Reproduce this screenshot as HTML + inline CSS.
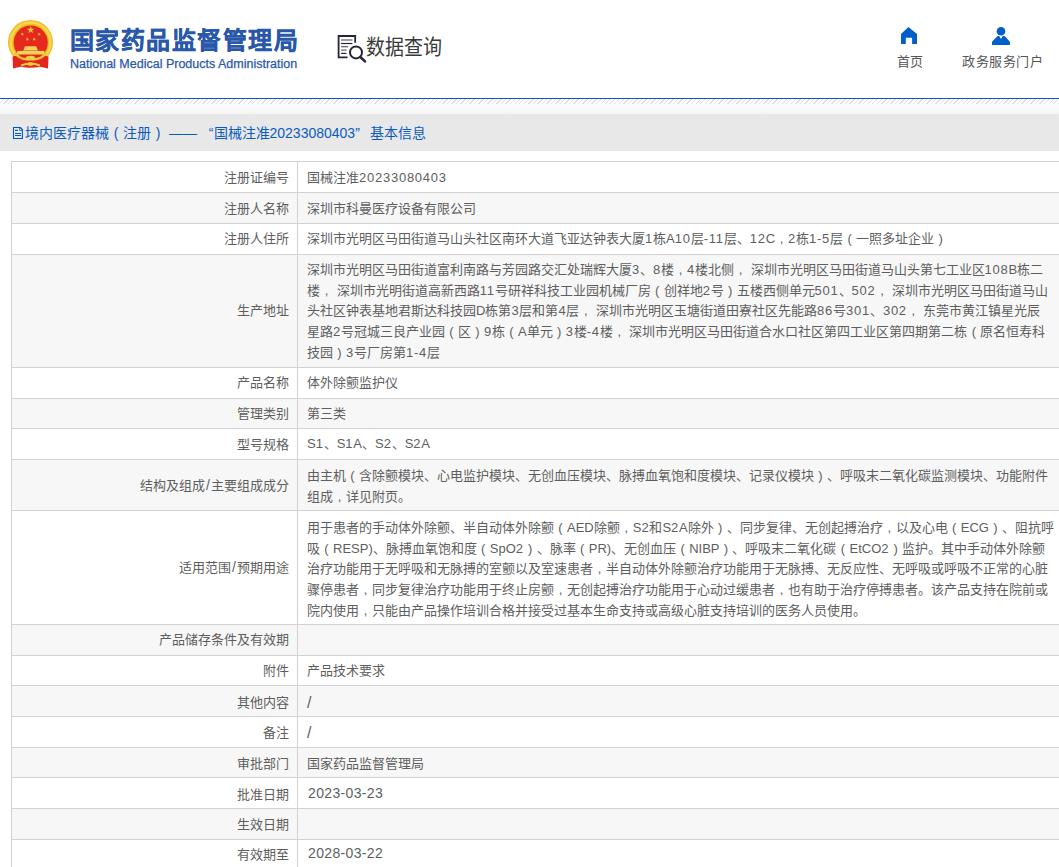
<!DOCTYPE html>
<html lang="zh-CN">
<head>
<meta charset="utf-8">
<style>
html,body{margin:0;padding:0;}
body{text-spacing-trim:space-all;width:1059px;height:867px;overflow:hidden;position:relative;background:#fff;font-family:"Liberation Sans",sans-serif;color:#555;}
.abs{position:absolute;white-space:nowrap;}
#title{left:69.5px;top:25.5px;font-size:24px;font-weight:bold;color:#2958ab;letter-spacing:1.55px;line-height:30px;-webkit-text-stroke:0.3px #2958ab;}
#eng{left:70px;top:56px;font-size:12.5px;color:#2958ab;line-height:16px;-webkit-text-stroke:0.25px #2958ab;}
#dq{left:366px;top:32px;font-size:19px;color:#3a3a3a;line-height:28px;transform:scaleY(1.1);transform-origin:0 0;}
.nav{font-size:13px;color:#555;line-height:16px;}
#bline{left:0;top:98px;width:1059px;height:1px;background:#0a5cc2;}
#hatch{left:0;top:99px;width:1059px;height:5px;background:repeating-linear-gradient(135deg,#fff 0,#fff 2.2px,#dddddd 2.2px,#dddddd 3.2px);}
#grad{left:0;top:104px;width:1059px;height:10px;background:linear-gradient(#fff,#f4f4f4);}
#band{left:0;top:114px;width:1059px;height:37px;background:#e8e8e8;}
.dash{display:inline-block;width:34px;padding-left:4px;box-sizing:border-box;}
.q1{display:inline-block;width:14.5px;text-align:right;}
.q2{display:inline-block;width:15px;text-align:left;}
#head{left:25px;top:124px;font-size:14px;color:#0b5bbf;line-height:18px;}
.row{position:absolute;left:11px;width:1100px;border-top:1px solid #d2d2d2;border-left:1px solid #d2d2d2;}
.row::after{content:"";position:absolute;left:285px;top:0;bottom:0;width:1px;background:#d2d2d2;}
.row .l{position:absolute;left:0;width:276.7px;text-align:right;}
.row .v{position:absolute;left:295px;}
.d{letter-spacing:0.75px;}
.sl{display:inline-block;width:5.5px;text-align:center;font-size:14px;}
.fw{display:inline-block;width:13px;text-align:center;}
#head .fw{width:14px;}
.row .l,.row .v{font-size:13px;line-height:20.65px;white-space:nowrap;color:#5e5e5e;}
</style>
</head>
<body>
<!-- emblem -->
<svg class="abs" style="left:0px;top:10px" width="60" height="62" viewBox="0 10 60 62">
  <circle cx="30.5" cy="42.4" r="22.5" fill="#f0bf2c"/>
  <circle cx="30.5" cy="42.4" r="19.8" fill="none" stroke="#f8d64e" stroke-width="2.2"/>
  <circle cx="30.7" cy="42.6" r="17.1" fill="#e5291d"/>
  <path d="M12.5 56.5 Q20 54.5 30.5 57 Q41 54.5 48.5 56.5 L48 68.5 L40.5 66.8 Q30.5 68.5 20.5 66.8 L13 68.5Z" fill="#e2281d"/>
  <path d="M14.5 53 Q22 61 30.5 58.8 Q39 61 46.5 53" fill="none" stroke="#efc63a" stroke-width="2.4"/>
  <ellipse cx="30.5" cy="58" rx="4.6" ry="2.3" fill="#f3cf48"/>
  <path d="M21.2 65.5 Q30.5 61.5 39.8 65.5" fill="none" stroke="#f1cb40" stroke-width="2"/>
  <ellipse cx="30.5" cy="64" rx="3.2" ry="1.8" fill="#f1cb40"/>
  <polygon points="30.70,26.00 31.64,28.71 34.50,28.76 32.22,30.49 33.05,33.24 30.70,31.60 28.35,33.24 29.18,30.49 26.90,28.76 29.76,28.71" fill="#e9c23c"/>
  <polygon points="23.15,32.45 22.93,33.77 24.06,34.50 22.74,34.69 22.40,35.99 21.80,34.79 20.46,34.87 21.42,33.93 20.93,32.69 22.12,33.30" fill="#e9c23c"/>
  <polygon points="38.25,32.45 39.28,33.30 40.47,32.69 39.98,33.93 40.94,34.87 39.60,34.79 39.00,35.99 38.66,34.69 37.34,34.50 38.47,33.77" fill="#e9c23c"/>
  <polygon points="27.89,37.36 28.02,38.70 29.30,39.10 28.07,39.64 28.08,40.97 27.19,39.97 25.92,40.40 26.60,39.24 25.81,38.17 27.11,38.45" fill="#e9c23c"/>
  <polygon points="33.81,37.36 34.59,38.45 35.89,38.17 35.10,39.24 35.78,40.40 34.51,39.97 33.62,40.97 33.63,39.64 32.40,39.10 33.68,38.70" fill="#e9c23c"/>
  <path d="M23.4 50.5 L25 46.2 H36.3 L37.9 50.5Z" fill="#f4d35a"/>
  <path d="M17.2 50.9 H44.5 V54.5 H17.2Z" fill="#f4d35a"/>
</svg>
<div id="title" class="abs">国家药品监督管理局</div>
<div id="eng" class="abs">National Medical Products Administration</div>
<!-- data query icon -->
<svg class="abs" style="left:330px;top:30px" width="40" height="36" viewBox="0 0 40 36">
  <path d="M25.2 12.8V6H8.6V27.3H17.5" fill="none" stroke="#262538" stroke-width="1.8"/>
  <path d="M11.1 10H22.4" stroke="#666675" stroke-width="1.3"/>
  <path d="M11.1 13.5H22.4" stroke="#262538" stroke-width="1.2"/>
  <path d="M11.1 16.7H18.1" stroke="#666675" stroke-width="1.3"/>
  <path d="M11.1 20.1H16.5" stroke="#666675" stroke-width="1.3"/>
  <path d="M11.1 23.4H16.5" stroke="#262538" stroke-width="1.2"/>
  <circle cx="26" cy="22.4" r="6" fill="#fff" stroke="#262538" stroke-width="2"/>
  <path d="M30.6 27.3L35 31.4" stroke="#262538" stroke-width="2.6" stroke-linecap="round"/>
</svg>
<div id="dq" class="abs">数据查询</div>
<!-- nav -->
<svg class="abs" style="left:895px;top:22px" width="30" height="28" viewBox="0 0 30 28">
  <path d="M13.4 5L22 12.1V22H17.1V15.7H10.8V22H6V12.1Z" fill="#005fc8"/>
</svg>
<div class="abs nav" style="left:897px;top:53.5px">首页</div>
<svg class="abs" style="left:986px;top:22px" width="30" height="28" viewBox="0 0 30 28">
  <circle cx="15" cy="9.2" r="4.3" fill="#005fc8"/>
  <path d="M6 22.9V19.8L11.6 14H13.2L15 17.1L16.8 14H18.7L23.9 19.8V22.9Z" fill="#005fc8"/>
</svg>
<div class="abs nav" style="left:962px;top:53.5px;letter-spacing:0.5px">政务服务门户</div>

<div id="bline" class="abs"></div>
<div id="hatch" class="abs"></div>
<div id="grad" class="abs"></div>
<div id="band" class="abs"></div>
<svg class="abs" style="left:8px;top:122px" width="20" height="22" viewBox="0 0 20 22">
  <path d="M5.5 5.5H12.4L14.4 7.6V16.5H5.5Z" fill="none" stroke="#0055c4" stroke-width="1.1"/>
  <path d="M11.3 5.3H12.6L14.6 7.4V8.7H11.3Z" fill="#0055c4"/>
  <circle cx="12.6" cy="7.4" r="0.7" fill="#f0f0f0"/>
  <path d="M7 8.4H9.8M7 11.5H13M7 13.5H13" stroke="#0055c4" stroke-width="1.1"/>
</svg>
<div id="head" class="abs">境内医疗器械<span class="fw">(</span>注册<span class="fw">)</span><span class="dash">——</span><span class="q1">“</span>国械注准20233080403<span class="q2">”</span>基本信息</div>

<div id="tbl">
<div class="row" style="top:161px;height:30px;background:#fff"><div class="l" style="top:6px">注册证编号</div><div class="v" style="top:6px">国械注准<span class="d">20233080403</span></div></div>
<div class="row" style="top:192px;height:30px;background:#f7f7f7"><div class="l" style="top:6px">注册人名称</div><div class="v" style="top:6px">深圳市科曼医疗设备有限公司</div></div>
<div class="row" style="top:223px;height:30px;background:#fff"><div class="l" style="top:5px">注册人住所</div><div class="v" style="top:5px">深圳市光明区马田街道马山头社区南环大道飞亚达钟表大厦<span class="d">1</span>栋A<span class="d">10</span>层<span class="d">-11</span>层、<span class="d">12</span>C<span class="fw">,</span><span class="d">2</span>栋<span class="d">1-5</span>层<span class="fw">(</span>一照多址企业<span class="fw">)</span></div></div>
<div class="row" style="top:254px;height:112px;background:#f7f7f7"><div class="l" style="top:46px">生产地址</div><div class="v" style="top:5px">深圳市光明区马田街道富利南路与芳园路交汇处瑞辉大厦<span class="d">3</span>、<span class="d">8</span>楼<span class="fw">,</span><span class="d">4</span>楼北侧<span class="fw">,</span> 深圳市光明区马田街道马山头第七工业区<span class="d">108</span>B栋二<br>楼<span class="fw">,</span> 深圳市光明街道高新西路<span class="d">11</span>号研祥科技工业园机械厂房<span class="fw">(</span>创祥地<span class="d">2</span>号<span class="fw">)</span>五楼西侧单元<span class="d">501</span>、<span class="d">502</span><span class="fw">,</span> 深圳市光明区马田街道马山<br>头社区钟表基地君斯达科技园D栋第<span class="d">3</span>层和第<span class="d">4</span>层<span class="fw">,</span> 深圳市光明区玉塘街道田寮社区先能路<span class="d">86</span>号<span class="d">301</span>、<span class="d">302</span><span class="fw">,</span> 东莞市黄江镇星光辰<br>星路<span class="d">2</span>号冠城三良产业园<span class="fw">(</span>区<span class="fw">)</span><span class="d">9</span>栋<span class="fw">(</span>A单元<span class="fw">)</span><span class="d">3</span>楼<span class="d">-4</span>楼<span class="fw">,</span> 深圳市光明区马田街道合水口社区第四工业区第四期第二栋<span class="fw">(</span>原名恒寿科<br>技园<span class="fw">)</span><span class="d">3</span>号厂房第<span class="d">1-4</span>层</div></div>
<div class="row" style="top:367px;height:30px;background:#fff"><div class="l" style="top:5px">产品名称</div><div class="v" style="top:5px">体外除颤监护仪</div></div>
<div class="row" style="top:398px;height:29px;background:#f7f7f7"><div class="l" style="top:5px">管理类别</div><div class="v" style="top:5px">第三类</div></div>
<div class="row" style="top:428px;height:30px;background:#fff"><div class="l" style="top:6px">型号规格</div><div class="v" style="top:5px">S<span class="d">1</span>、S<span class="d">1</span>A、S<span class="d">2</span>、S<span class="d">2</span>A</div></div>
<div class="row" style="top:459px;height:50px;background:#f7f7f7"><div class="l" style="top:15px">结构及组成<span class="sl">/</span>主要组成成分</div><div class="v" style="top:6px">由主机<span class="fw">(</span>含除颤模块、心电监护模块、无创血压模块、脉搏血氧饱和度模块、记录仪模块<span class="fw">)</span>、呼吸末二氧化碳监测模块、功能附件<br>组成<span class="fw">,</span>详见附页。</div></div>
<div class="row" style="top:510px;height:113px;background:#fff"><div class="l" style="top:46px">适用范围<span class="sl">/</span>预期用途</div><div class="v" style="top:7px">用于患者的手动体外除颤、半自动体外除颤<span class="fw">(</span>AED除颤<span class="fw">,</span>S<span class="d">2</span>和S<span class="d">2</span>A除外<span class="fw">)</span>、同步复律、无创起搏治疗<span class="fw">,</span>以及心电<span class="fw">(</span>ECG<span class="fw">)</span>、阻抗呼<br>吸<span class="fw">(</span>RESP)、脉搏血氧饱和度<span class="fw">(</span>SpO<span class="d">2</span><span class="fw">)</span>、脉率<span class="fw">(</span>PR)、无创血压<span class="fw">(</span>NIBP<span class="fw">)</span>、呼吸末二氧化碳<span class="fw">(</span>EtCO<span class="d">2</span><span class="fw">)</span>监护。其中手动体外除颤<br>治疗功能用于无呼吸和无脉搏的室颤以及室速患者<span class="fw">,</span>半自动体外除颤治疗功能用于无脉搏、无反应性、无呼吸或呼吸不正常的心脏<br>骤停患者<span class="fw">,</span>同步复律治疗功能用于终止房颤<span class="fw">,</span>无创起搏治疗功能用于心动过缓患者<span class="fw">,</span>也有助于治疗停搏患者。该产品支持在院前或<br>院内使用<span class="fw">,</span>只能由产品操作培训合格并接受过基本生命支持或高级心脏支持培训的医务人员使用。</div></div>
<div class="row" style="top:624px;height:30px;background:#f7f7f7"><div class="l" style="top:5px">产品储存条件及有效期</div><div class="v" style="top:5px"></div></div>
<div class="row" style="top:655px;height:29px;background:#fff"><div class="l" style="top:5px">附件</div><div class="v" style="top:5px">产品技术要求</div></div>
<div class="row" style="top:685px;height:30px;background:#f7f7f7"><div class="l" style="top:7px">其他内容</div><div class="v" style="top:7px"><span style="font-size:16px;position:relative;top:-0.5px">/</span></div></div>
<div class="row" style="top:716px;height:30px;background:#fff"><div class="l" style="top:6px">备注</div><div class="v" style="top:6px"><span style="font-size:16px;position:relative;top:-0.5px">/</span></div></div>
<div class="row" style="top:747px;height:29px;background:#f7f7f7"><div class="l" style="top:6px">审批部门</div><div class="v" style="top:6px">国家药品监督管理局</div></div>
<div class="row" style="top:777px;height:30px;background:#fff"><div class="l" style="top:7px">批准日期</div><div class="v" style="top:5px"><span style="font-size:14px;letter-spacing:0.35px;position:relative;left:1px">2023-03-23</span></div></div>
<div class="row" style="top:808px;height:30px;background:#f7f7f7"><div class="l" style="top:6px">生效日期</div><div class="v" style="top:6px"></div></div>
<div class="row" style="top:839px;height:30px;background:#fff"><div class="l" style="top:5px">有效期至</div><div class="v" style="top:3px"><span style="font-size:14px;letter-spacing:0.35px;position:relative;left:1px">2028-03-22</span></div></div>
</div>
</body>
</html>
